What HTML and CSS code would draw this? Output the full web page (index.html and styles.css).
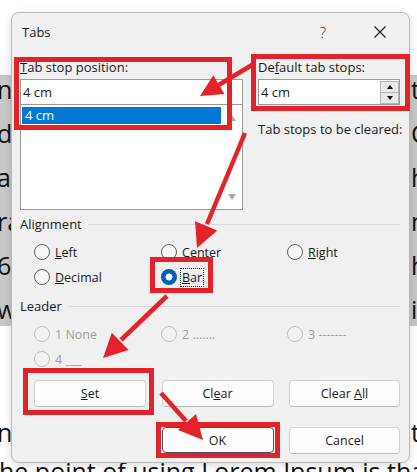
FILE: index.html
```html
<!DOCTYPE html>
<html>
<head>
<meta charset="utf-8">
<title>Tabs</title>
<link rel="stylesheet" href="styles.css">
</head>
<body>
<div class="doc">
  <div class="sel">
    <div class="ln"><span class="l">nv</span><span class="r">t</span></div>
    <div class="ln"><span class="l">d</span><span class="r">Co</span></div>
    <div class="ln"><span class="l">ar</span><span class="r">h</span></div>
    <div class="ln"><span class="l">ra</span><span class="r">n</span></div>
    <div class="ln"><span class="l">6</span><span class="r">h</span></div>
    <div class="ln"><span class="l">w</span><span class="r">i</span></div>
  </div>
  <div class="ln ln7"><span class="l">n</span><span class="r">th</span></div>
  <div class="ln8">he point of using Lorem Ipsum is that</div>
</div>

<div class="dialog">
  <div class="titlebar">
    <span class="title">Tabs</span>
    <span class="tb-btn help">?</span>
    <span class="tb-btn close"><svg width="12" height="12" viewBox="0 0 12 12"><path d="M0.5 0.5 L11.5 11.5 M11.5 0.5 L0.5 11.5" stroke="#1f1f1f" stroke-width="1.1" fill="none"/></svg></span>
  </div>
  <div class="content">
    <div class="top">
      <div class="col-left">
        <div class="lbl"><u>T</u>ab stop position:</div>
        <div class="input">4 cm</div>
        <div class="list">
          <div class="items"><div class="item">4 cm</div></div>
          <div class="scroll"><span class="tri-up"></span><span class="tri-down"></span></div>
        </div>
      </div>
      <div class="col-right">
        <div class="lbl">De<u>f</u>ault tab stops:</div>
        <div class="input spin">
          <span>4 cm</span>
          <span class="spinbtns">
            <span class="sb"><span class="stri-up"></span></span>
            <span class="sb"><span class="stri-down"></span></span>
          </span>
        </div>
        <div class="lbl cleared">Tab stops to be cleared:</div>
      </div>
    </div>

    <div class="ghead"><span>Alignment</span><span class="rule"></span></div>
    <div class="radios">
      <div class="radio"><span class="dot"></span><span><u>L</u>eft</span></div>
      <div class="radio"><span class="dot"></span><span><u>C</u>enter</span></div>
      <div class="radio"><span class="dot"></span><span><u>R</u>ight</span></div>
      <div class="radio"><span class="dot"></span><span><u>D</u>ecimal</span></div>
      <div class="radio"><span class="dot on"></span><span class="focus"><u>B</u>ar</span></div>
    </div>

    <div class="ghead lead"><span>Leader</span><span class="rule"></span></div>
    <div class="radios off">
      <div class="radio"><span class="dot"></span><span>1 None</span></div>
      <div class="radio"><span class="dot"></span><span>2 .......</span></div>
      <div class="radio"><span class="dot"></span><span>3 -------</span></div>
      <div class="radio"><span class="dot"></span><span>4 ___</span></div>
    </div>

    <div class="btns">
      <div class="btn"><span><u>S</u>et</span></div>
      <div class="btn"><span>Cl<u>e</u>ar</span></div>
      <div class="btn"><span>Clear <u>A</u>ll</span></div>
      <div class="btn ok c2">OK</div>
      <div class="btn">Cancel</div>
    </div>
  </div>
</div>

<svg class="annot" width="417" height="472" viewBox="0 0 417 472">
  <g fill="none" stroke="#e3222a" stroke-width="5">
    <rect x="16.5" y="59.5" width="213" height="68"/>
    <rect x="253.5" y="56.5" width="154" height="52"/>
    <rect x="152.5" y="259.5" width="58" height="31"/>
    <rect x="25.5" y="370.5" width="126" height="42"/>
    <rect x="158.5" y="424.5" width="119" height="31"/>
  </g>
  <g stroke="#e3222a" stroke-width="4.5" fill="none">
    <line x1="252" y1="65" x2="217" y2="86"/>
    <line x1="245" y1="133" x2="207" y2="224"/>
    <line x1="167" y1="296" x2="121" y2="340"/>
    <line x1="161" y1="393" x2="186" y2="421"/>
  </g>
  <g fill="#e3222a">
    <polygon points="200,96 213.3,75.3 224.5,94.1"/>
    <polygon points="197,248 195.1,221.2 217.3,230.4"/>
    <polygon points="103,358 111.8,332.7 128.6,349.9"/>
    <polygon points="203,440 178,430.1 196,414.1"/>
  </g>
</svg>
</body>
</html>
```

FILE: styles.css
```css
* { box-sizing: border-box; }
html, body { margin: 0; padding: 0; }
body {
  width: 417px;
  height: 472px;
  overflow: hidden;
  position: relative;
  background: #ffffff;
  font-family: "Open Sans", "Noto Sans", sans-serif;
}

/* background document */
.doc {
  font-size: 25px;
  color: #111;
  padding-top: 75px;
}
.sel {
  display: flex;
  flex-direction: column;
  height: 251px;
  background: #c8c8c8;
}
.ln {
  flex: none;
  display: flex;
  justify-content: space-between;
  height: 44px;
  line-height: 44px;
  white-space: nowrap;
}
.sel .ln:first-child { margin-top: -8px; }
.l { margin-left: -3px; }
.r { flex: none; width: 6px; overflow: visible; }
.ln7 { margin-top: 88px; height: 36px; line-height: 36px; }
.ln8 { margin-top: 3px; margin-left: -1px; height: 36px; line-height: 36px; white-space: nowrap; }

/* dialog */
.dialog {
  position: absolute;
  left: 11px;
  top: 12px;
  width: 399px;
  height: 451px;
  background: #f0f0f0;
  border: 1px solid #b9b9b9;
  border-radius: 8px;
  box-shadow: 0 2px 8px rgba(0,0,0,0.15);
  color: #1a1a1a;
  font-size: 13px;
}
.titlebar {
  height: 37px;
  display: flex;
  align-items: center;
  padding-left: 10px;
}
.title { flex: 1; font-size: 13px; }
.tb-btn {
  width: 40px;
  display: flex;
  align-items: center;
  justify-content: center;
}
.help { font-size: 15px; font-weight: 300; color: #222; margin-right: 17px; }
.close { margin-right: 9px; }

.content { padding: 0 8px; }
.top { display: flex; gap: 15px; margin-top: 8px; }
.col-left { width: 223px; }
.col-right { width: 142px; }
.lbl { height: 18px; line-height: 18px; white-space: nowrap; }
.input {
  margin-top: 3px;
  height: 26px;
  line-height: 24px;
  border: 1px solid #9a9a9a;
  background: #fff;
  padding-left: 2px;
}
.list {
  margin-top: -1px;
  height: 106px;
  border: 1px solid #9a9a9a;
  background: #fff;
  display: grid;
  grid-template-columns: 1fr 20px;
}
.items { padding: 2px 1px 0 1px; }
.item {
  height: 17px;
  line-height: 17px;
  background: #0078d4;
  color: #fff;
  padding-left: 3px;
}
.scroll {
  display: flex;
  flex-direction: column;
  justify-content: space-between;
  align-items: center;
  padding: 10px 0 9px;
}
.tri-up, .tri-down {
  width: 0; height: 0;
  border-left: 4.5px solid transparent;
  border-right: 4.5px solid transparent;
}
.tri-up { border-bottom: 6px solid #a8a8a8; }
.tri-down { border-top: 6px solid #a8a8a8; }

.spin { display: flex; justify-content: space-between; align-items: center; padding-right: 0; }
.spinbtns { display: flex; flex-direction: column; width: 19px; height: 23px; }
.sb {
  flex: 1;
  display: flex;
  align-items: center;
  justify-content: center;
  border: 1px solid #b4b4b4;
  background: #e8e8e8;
}
.sb + .sb { margin-top: -1px; }
.stri-up, .stri-down {
  width: 0; height: 0;
  border-left: 3.5px solid transparent;
  border-right: 3.5px solid transparent;
}
.stri-up { border-bottom: 4px solid #111; }
.stri-down { border-top: 4px solid #111; }
.cleared { margin-top: 15px; }

/* groups */
.ghead { display: flex; align-items: center; height: 18px; margin-top: 5px; }
.ghead.lead { margin-top: 7.5px; }
.rule { flex: 1; height: 1px; background: #d9d9d9; margin-left: 6px; margin-right: 1px; }
.radios {
  display: grid;
  grid-template-columns: 127px 126px 1fr;
  padding-left: 14px;
  margin-top: 6.5px;
  font-size: 12.5px;
}
.radio { display: flex; align-items: center; gap: 5px; height: 25px; white-space: nowrap; }
.dot {
  flex: none;
  width: 16px; height: 16px;
  border-radius: 50%;
  border: 1px solid #5c5c5c;
  background: #f7f7f7;
}
.dot.on {
  border: none;
  background: radial-gradient(circle, #ffffff 0 3.2px, #005fb8 3.8px);
}
.focus {
  margin-left: -2px;
  border: 1px dotted #222;
  padding: 0 1px;
  line-height: 17px;
}
.off { color: #9d9d9d; }
.off .dot { border-color: #bdbdbd; background: #f2f2f2; }

/* buttons */
.btns {
  display: grid;
  grid-template-columns: 112px 112px 111px;
  column-gap: 15.5px;
  row-gap: 20px;
  padding-left: 14px;
  margin-top: 8.5px;
  font-size: 12.5px;
}
.btn {
  height: 27px;
  border: 1px solid #d2d2d2;
  border-bottom-color: #bcbcbc;
  border-radius: 4px;
  background: #fdfdfd;
  display: flex;
  align-items: center;
  justify-content: center;
}
.c2 { grid-column: 2; }
.ok { border: 1px solid #44566f; height: 26px; }

.annot {
  position: absolute;
  left: 0;
  top: 0;
  pointer-events: none;
}
```
